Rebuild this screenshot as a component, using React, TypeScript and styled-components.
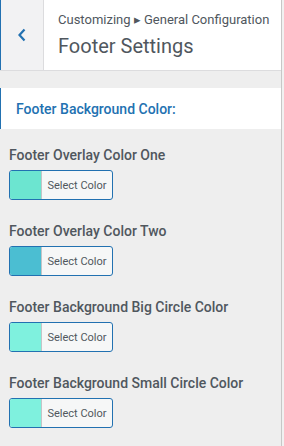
import styled, { createGlobalStyle } from 'styled-components';

const GlobalStyle = createGlobalStyle`
  html, body {
    margin: 0;
    padding: 0;
    background: #eeeeee;
  }
  body {
    font-family: Roboto, "Noto Sans", sans-serif;
    -webkit-font-smoothing: antialiased;
  }
`;

const Page = styled.div`
  width: 284px;
  height: 446px;
  display: flex;
  overflow: hidden;
  background: #eeeeee;
`;

const Panel = styled.div`
  width: 281px;
  display: flex;
  flex-direction: column;
`;

const Scrollbar = styled.div`
  width: 2px;
  border-left: 1px solid #c7c7c7;
  background: #f1f1f1;
`;

const Header = styled.div`
  height: 70px;
  display: flex;
  background: #ffffff;
  border-bottom: 1px solid #dcdcde;
`;

const BackButton = styled.button`
  width: 44px;
  padding: 0;
  border: 0;
  border-left: 1px solid #2271b1;
  border-right: 1px solid #dcdcde;
  background: #f2f2f3;
  display: flex;
  align-items: center;
  justify-content: center;
  cursor: pointer;
`;

const HeaderText = styled.div`
  flex: 1;
  padding: 11px 0 0 14px;
  color: #50575e;
`;

const Breadcrumb = styled.div`
  font-size: 13px;
  line-height: 17px;
`;

const PageTitle = styled.h3`
  margin: 6px 0 0;
  font-size: 20px;
  font-weight: 400;
  line-height: 24px;
`;

const SectionTitle = styled.div`
  margin-top: 17px;
  height: 41px;
  background: #ffffff;
  border-left: 1px solid #2271b1;
  padding-left: 15px;
  display: flex;
  align-items: center;
  font-size: 14px;
  font-weight: 500;
  color: #2271b1;
`;

const Controls = styled.div`
  padding: 17px 9px 0;
  display: flex;
  flex-direction: column;
  gap: 22px;
`;

const Control = styled.div`
  display: flex;
  flex-direction: column;
  gap: 6px;
`;

const Label = styled.span`
  font-size: 14px;
  font-weight: 500;
  line-height: 18px;
  color: #50575e;
`;

const ColorButton = styled.button`
  width: 104px;
  height: 30px;
  padding: 0;
  display: flex;
  border: 1px solid #2271b1;
  border-radius: 3px;
  overflow: hidden;
  background: #f6f7f7;
  cursor: pointer;
`;

const Swatch = styled.span<{ $color: string }>`
  width: 31px;
  background: ${(p) => p.$color};
  border-right: 1px solid #c3c4c7;
`;

const ButtonText = styled.span`
  flex: 1;
  display: flex;
  align-items: center;
  justify-content: center;
  font-family: Roboto, "Noto Sans", sans-serif;
  font-size: 11px;
  color: #50575e;
`;

const controls = [
  { label: 'Footer Overlay Color One', color: '#6ce5d0' },
  { label: 'Footer Overlay Color Two', color: '#4bbed2' },
  { label: 'Footer Background Big Circle Color', color: '#7ff1de' },
  { label: 'Footer Background Small Circle Color', color: '#7ff1de' },
];

export default function App() {
  return (
    <Page>
      <GlobalStyle />
      <Panel>
        <Header>
          <BackButton type="button" aria-label="Back">
            <svg width="10" height="14" viewBox="0 0 10 14">
              <path d="M7.5 1.5 L2.5 7 L7.5 12.5" fill="none" stroke="#2271b1" strokeWidth="2.2" />
            </svg>
          </BackButton>
          <HeaderText>
            <Breadcrumb>Customizing ▸ General Configuration</Breadcrumb>
            <PageTitle>Footer Settings</PageTitle>
          </HeaderText>
        </Header>
        <SectionTitle>Footer Background Color:</SectionTitle>
        <Controls>
          {controls.map((c) => (
            <Control key={c.label}>
              <Label>{c.label}</Label>
              <ColorButton type="button">
                <Swatch $color={c.color} />
                <ButtonText>Select Color</ButtonText>
              </ColorButton>
            </Control>
          ))}
        </Controls>
      </Panel>
      <Scrollbar />
    </Page>
  );
}
